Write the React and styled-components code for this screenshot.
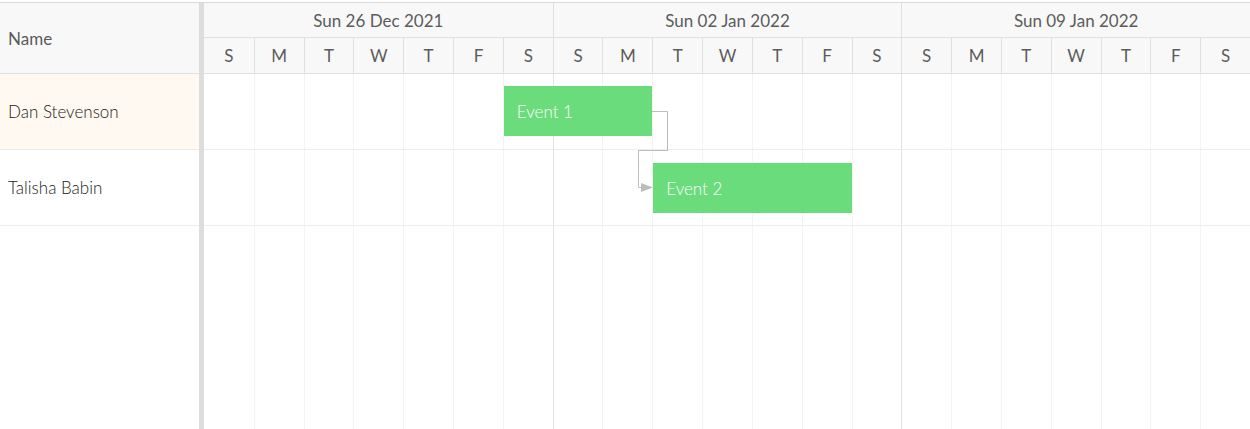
import React from "react";
import styled, { createGlobalStyle } from "styled-components";

const GlobalStyle = createGlobalStyle`
  body {
    margin: 0;
    background: #fff;
    font-family: Lato, "Open Sans", sans-serif;
  }
`;

const DAY_COUNT = 21;
const DAY_WIDTH = 1046 / DAY_COUNT;

const weeks = ["Sun 26 Dec 2021", "Sun 02 Jan 2022", "Sun 09 Jan 2022"];
const dayLetters = ["S", "M", "T", "W", "T", "F", "S"];

const resources = [
  { id: 1, name: "Dan Stevenson", highlight: true },
  { id: 2, name: "Talisha Babin" },
];

const events = [
  { id: 1, name: "Event 1", row: 0, start: 6, days: 3 },
  { id: 2, name: "Event 2", row: 1, start: 9, days: 4 },
];

const Scheduler = styled.div`
  margin-top: 2px;
  border-top: 1px solid #d9d9d9;
  display: flex;
  height: 426px;
  overflow: hidden;
`;

const LeftPane = styled.div`
  width: 199px;
  flex-shrink: 0;
  display: flex;
  flex-direction: column;
`;

const Splitter = styled.div`
  width: 5px;
  flex-shrink: 0;
  background: #dddddd;
`;

const RightPane = styled.div`
  flex: 1;
  display: flex;
  flex-direction: column;
  min-width: 0;
`;

const NameHeader = styled.div`
  height: 70px;
  border-bottom: 1px solid #e0e0e0;
  background: #f8f8f8;
  display: flex;
  align-items: center;
  padding-left: 8px;
  font-size: 17px;
  font-weight: 400;
  color: #5a5a5a;
`;

const NameCell = styled.div`
  height: 75px;
  border-bottom: 1px solid #ececec;
  background: ${(p) => (p.$highlight ? "#fff9f1" : "#fff")};
  display: flex;
  align-items: center;
  padding-left: 8px;
  font-size: 17px;
  font-weight: 300;
  color: #222;
`;

const HeaderRow = styled.div`
  display: grid;
  grid-template-columns: repeat(${(p) => p.$cols}, 1fr);
  height: ${(p) => p.$height}px;
  background: #f8f8f8;
  border-bottom: 1px solid #e0e0e0;
`;

const HeaderCell = styled.div`
  display: flex;
  align-items: center;
  justify-content: center;
  font-size: 17px;
  font-weight: 400;
  color: #5c5c5c;
  border-left: ${(p) => (p.$first ? "none" : "1px solid #e0e0e0")};
`;

const Body = styled.div`
  position: relative;
  flex: 1;
`;

const GridLines = styled.div`
  position: absolute;
  inset: 0;
  display: grid;
  grid-template-columns: repeat(${DAY_COUNT}, 1fr);
`;

const DayColumn = styled.div`
  border-left: ${(p) =>
    p.$first ? "none" : p.$week ? "1px solid #e2e2e2" : "1px solid #f3f3f3"};
`;

const RowLine = styled.div`
  position: relative;
  height: 75px;
  border-bottom: 1px solid #ececec;
`;

const EventBar = styled.div`
  position: absolute;
  height: 50px;
  background: #6bdc7c;
  color: #fff;
  font-size: 17px;
  font-weight: 300;
  display: flex;
  align-items: center;
  padding-left: 13px;
  box-sizing: border-box;
  z-index: 2;
`;

const Dependencies = styled.svg`
  position: absolute;
  left: 0;
  top: 0;
  overflow: visible;
  z-index: 1;
`;

export default function App() {
  return (
    <>
      <GlobalStyle />
      <Scheduler>
        <LeftPane>
          <NameHeader>Name</NameHeader>
          {resources.map((r) => (
            <NameCell key={r.id} $highlight={r.highlight}>
              {r.name}
            </NameCell>
          ))}
        </LeftPane>
        <Splitter />
        <RightPane>
          <HeaderRow $cols={3} $height={34}>
            {weeks.map((w, i) => (
              <HeaderCell key={w} $first={i === 0}>
                {w}
              </HeaderCell>
            ))}
          </HeaderRow>
          <HeaderRow $cols={DAY_COUNT} $height={35}>
            {Array.from({ length: DAY_COUNT }, (_, i) => (
              <HeaderCell key={i} $first={i === 0}>
                {dayLetters[i % 7]}
              </HeaderCell>
            ))}
          </HeaderRow>
          <Body>
            <GridLines>
              {Array.from({ length: DAY_COUNT }, (_, i) => (
                <DayColumn key={i} $first={i === 0} $week={i % 7 === 0} />
              ))}
            </GridLines>
            {resources.map((r) => (
              <RowLine key={r.id} />
            ))}
            {events.map((e) => (
              <EventBar
                key={e.id}
                style={{
                  left: e.start * DAY_WIDTH + 1,
                  width: e.days * DAY_WIDTH - 1,
                  top: e.row * 77 + 12,
                }}
              >
                {e.name}
              </EventBar>
            ))}
            <Dependencies width="1046" height="200">
              <polyline
                points="448,37.5 463.5,37.5 463.5,76.5 434.5,76.5 434.5,113.5 440,113.5"
                fill="none"
                stroke="#bdbdbd"
                strokeWidth="1"
              />
              <polygon points="437,109 449,113.5 437,118" fill="#bdbdbd" />
            </Dependencies>
          </Body>
        </RightPane>
      </Scheduler>
    </>
  );
}
